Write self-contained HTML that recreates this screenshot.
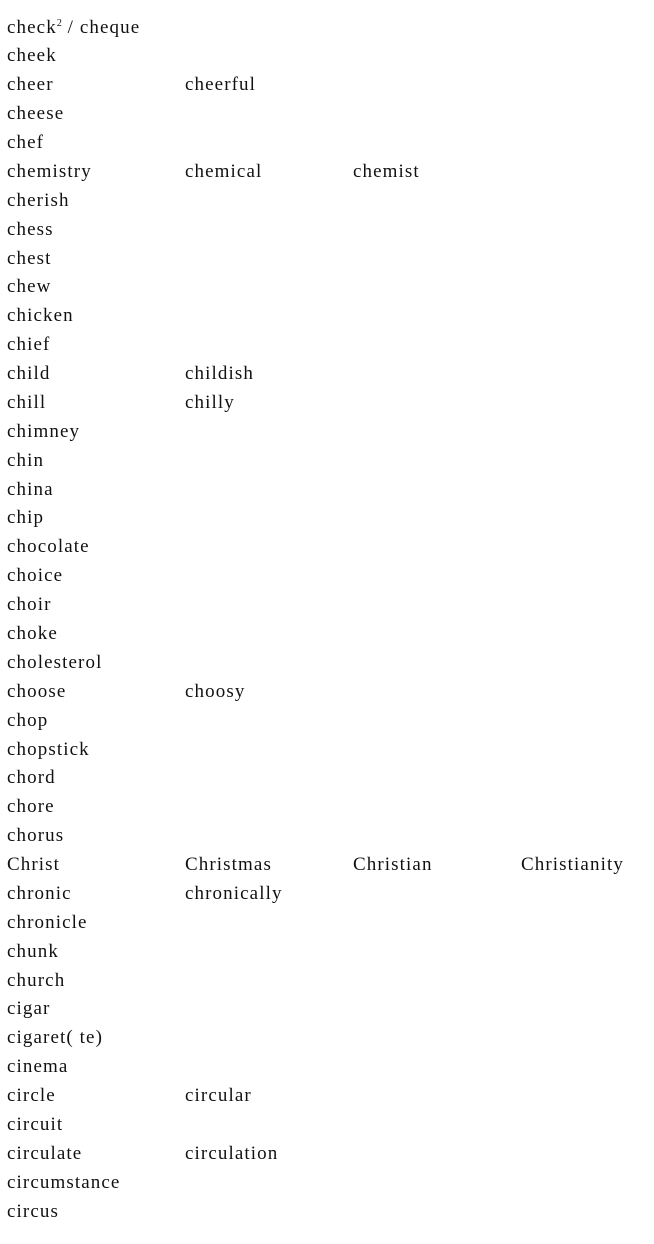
<!DOCTYPE html>
<html><head><meta charset="utf-8"><style>
html,body{margin:0;padding:0;background:#fff;width:654px;height:1244px;overflow:hidden}
body{font-family:"Liberation Serif","Noto Serif CJK SC",serif;font-size:19px;letter-spacing:1.1px;color:#111;position:relative}
.r{position:absolute;left:0;height:29px;line-height:29px;white-space:nowrap;width:654px}
.r span{position:absolute;top:0}
.a{left:7px}.b{left:185px}.c{left:353px}.d{left:521px}
sup{font-size:10px;vertical-align:0;position:relative;top:-7px;letter-spacing:0}
</style></head><body>
<div id="w"></div>
<script>
var rows=[
["check<sup>2</sup> / cheque"],["cheek"],["cheer","cheerful"],["cheese"],["chef"],
["chemistry","chemical","chemist"],["cherish"],["chess"],["chest"],["chew"],["chicken"],["chief"],
["child","childish"],["chill","chilly"],["chimney"],["chin"],["china"],["chip"],["chocolate"],
["choice"],["choir"],["choke"],["cholesterol"],["choose","choosy"],["chop"],["chopstick"],
["chord"],["chore"],["chorus"],["Christ","Christmas","Christian","Christianity"],
["chronic","chronically"],["chronicle"],["chunk"],["church"],["cigar"],["cigaret( te)"],
["cinema"],["circle","circular"],["circuit"],["circulate","circulation"],["circumstance"],["circus"]];
var cls=["a","b","c","d"],h="";
rows.forEach(function(r,i){
 h+='<div class="r" style="top:'+(12.5+i*28.88).toFixed(2)+'px">';
 r.forEach(function(t,j){h+='<span class="'+cls[j]+'">'+t+'</span>';});
 h+='</div>';
});
document.getElementById("w").innerHTML=h;
</script>
</body></html>
